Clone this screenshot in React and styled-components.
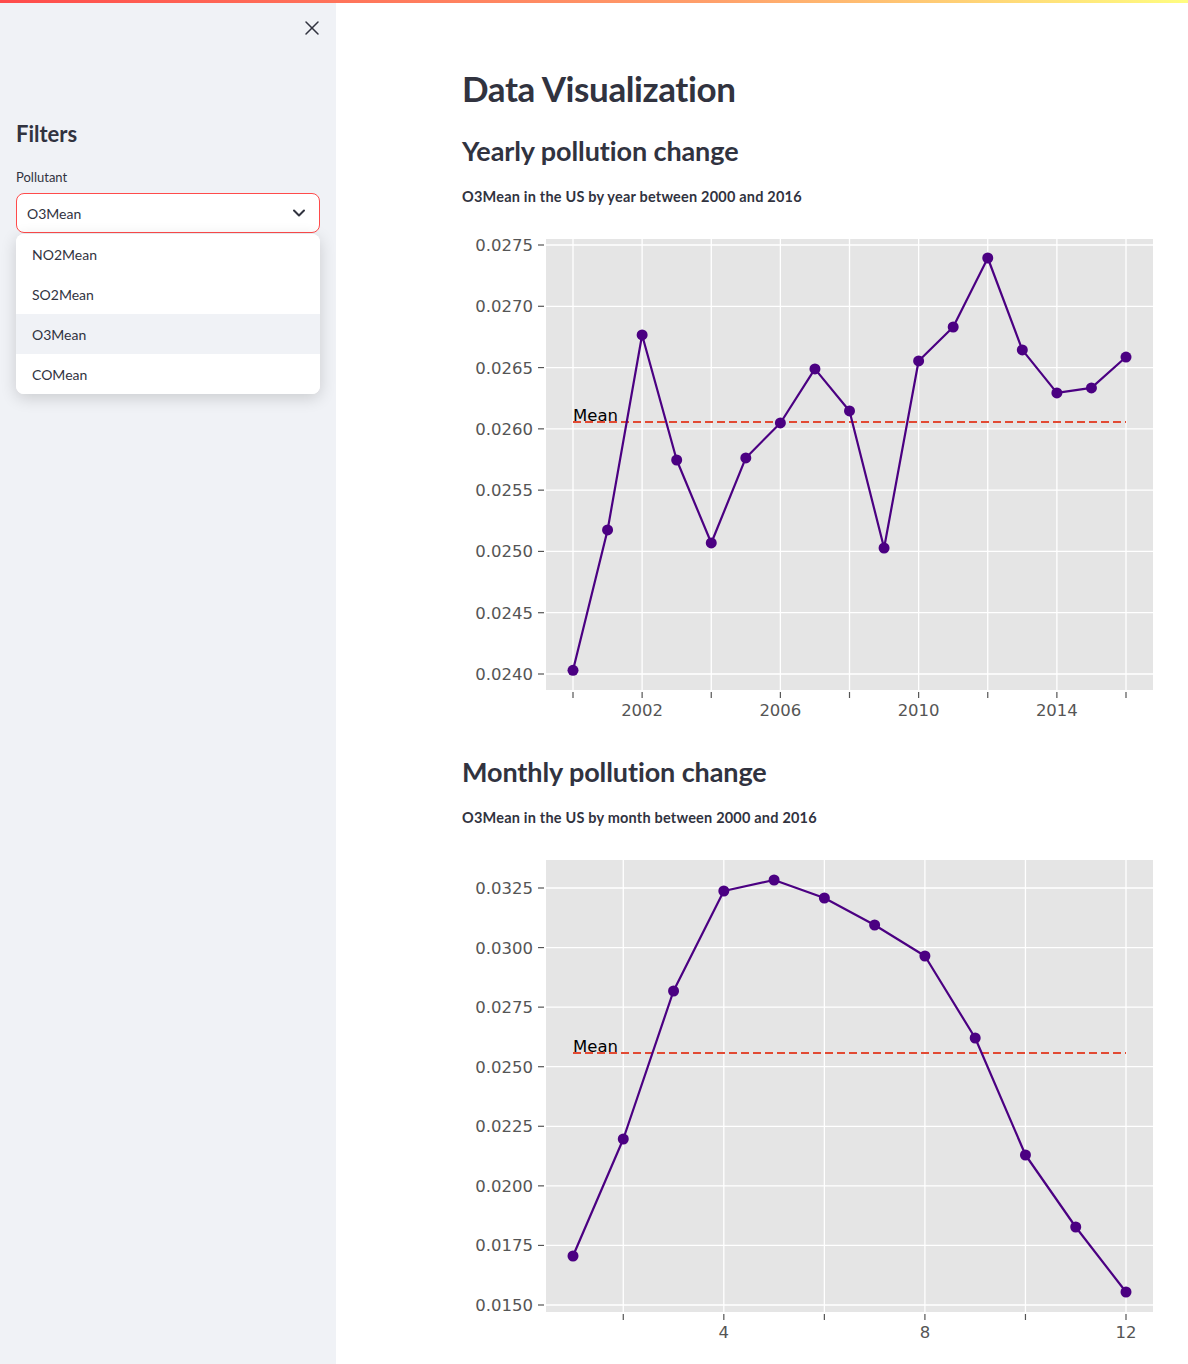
import React from "react";
import styled, { createGlobalStyle } from "styled-components";
import { X, ChevronDown } from "lucide-react";

const GlobalStyle = createGlobalStyle`
  html, body { margin: 0; padding: 0; background: #ffffff; }
  body {
    font-family: "Lato", "Noto Sans", sans-serif;
    color: #31333f;
    -webkit-font-smoothing: antialiased;
  }
  * { box-sizing: border-box; }
`;

const Page = styled.div`
  display: flex;
  flex-direction: column;
  width: 1188px;
  min-height: 1364px;
`;

const Decoration = styled.div`
  height: 3px;
  background: linear-gradient(90deg, #ff4b4b 0%, #ffa06b 60%, #fffd80 100%);
`;

const Layout = styled.div`
  display: flex;
  flex: 1;
`;

const Sidebar = styled.aside`
  width: 336px;
  flex-shrink: 0;
  background: #f0f2f6;
  padding: 13px 16px 0 16px;
  display: flex;
  flex-direction: column;
`;

const CloseRow = styled.div`
  display: flex;
  justify-content: flex-end;
  margin-right: -4px;
  color: #31333f;
  height: 24px;
`;

const SidebarTitle = styled.h2`
  margin: 79px 0 0 0;
  font-size: 22px;
  line-height: 30px;
  font-weight: 700;
  color: #31333f;
`;

const FieldLabel = styled.label`
  margin-top: 19px;
  font-size: 13px;
  line-height: 18px;
  color: #31333f;
`;

const SelectWrap = styled.div`
  position: relative;
  margin-top: 7px;
`;

const SelectBox = styled.div`
  height: 40px;
  border: 1px solid #ff4b4b;
  border-radius: 8px;
  background: #ffffff;
  display: flex;
  align-items: center;
  justify-content: space-between;
  padding: 0 10px 0 10px;
  font-size: 14px;
  color: #31333f;
`;

const Menu = styled.ul`
  position: absolute;
  top: calc(100% + 1px);
  left: 0;
  right: 0;
  margin: 0;
  padding: 0;
  list-style: none;
  background: #ffffff;
  border-radius: 8px;
  overflow: hidden;
  box-shadow: 0 4px 16px rgba(0, 0, 0, 0.16);
  z-index: 2;
`;

const MenuItem = styled.li`
  height: 40px;
  display: flex;
  align-items: center;
  padding-left: 16px;
  font-size: 14px;
  color: #31333f;
  background: ${(p) => (p.$active ? "#f0f2f6" : "#ffffff")};
`;

const Main = styled.main`
  flex: 1;
  padding: 63px 26px 0 126px;
  display: flex;
  flex-direction: column;
`;

const Title = styled.h1`
  margin: 0;
  font-size: 35px;
  line-height: 44px;
  font-weight: 700;
  color: #31333f;
  letter-spacing: -0.4px;
`;

const Section = styled.section`
  display: flex;
  flex-direction: column;
  margin-top: ${(p) => p.$gap}px;
`;

const SectionTitle = styled.h2`
  margin: 0;
  font-size: 27px;
  line-height: 36px;
  font-weight: 700;
  color: #31333f;
  letter-spacing: -0.1px;
`;

const Caption = styled.div`
  margin-top: 18px;
  font-size: 14.5px;
  line-height: 20px;
  font-weight: 700;
  letter-spacing: 0.2px;
  color: #31333f;
`;

const ChartFrame = styled.div`
  margin-top: 18px;
  display: flex;
`;

const yearly = [
  [2000, 0.02403], [2001, 0.025175], [2002, 0.026766], [2003, 0.025746],
  [2004, 0.025069], [2005, 0.025763], [2006, 0.026048], [2007, 0.026489],
  [2008, 0.026146], [2009, 0.025028], [2010, 0.026554], [2011, 0.026831],
  [2012, 0.027394], [2013, 0.026644], [2014, 0.026293], [2015, 0.026334],
  [2016, 0.026586],
];

const monthly = [
  [1, 0.017056], [2, 0.021966], [3, 0.028177], [4, 0.032374],
  [5, 0.032836], [6, 0.03208], [7, 0.030947], [8, 0.029646],
  [9, 0.026205], [10, 0.021295], [11, 0.018273], [12, 0.015545],
];

const range = (a, b, s) => {
  const out = [];
  for (let v = a; v <= b + 1e-9; v += s) out.push(+v.toFixed(6));
  return out;
};

const yearlyCfg = {
  width: 700,
  height: 505,
  plot: { l: 84, r: 691, t: 14, b: 465 },
  x: (v) => 111 + (v - 2000) * 34.5625,
  y: (v) => 20 + ((0.0275 - v) / 0.0005) * 61.286,
  yTicks: range(0.024, 0.0275, 0.0005),
  xTicks: range(2000, 2016, 2),
  xLabels: [2002, 2006, 2010, 2014],
  mean: 0.026056,
  xFirst: 2000,
  xLast: 2016,
  labelY: 491,
};

const monthlyCfg = {
  width: 700,
  height: 518,
  plot: { l: 84, r: 691, t: 14, b: 466 },
  x: (v) => 111 + (v - 1) * 50.273,
  y: (v) => 42 + ((0.0325 - v) / 0.0025) * 59.571,
  yTicks: range(0.015, 0.0325, 0.0025),
  xTicks: range(2, 12, 2),
  xLabels: [4, 8, 12],
  mean: 0.025576,
  xFirst: 1,
  xLast: 12,
  labelY: 492,
};

const tickFont = "'DejaVu Sans', 'Liberation Sans', sans-serif";

function LineChart({ cfg, data }) {
  const { plot, x, y } = cfg;
  const pts = data.map(([a, b]) => `${x(a).toFixed(1)},${y(b).toFixed(1)}`).join(" ");
  const my = y(cfg.mean);
  return (
    <svg width={cfg.width} height={cfg.height} viewBox={`0 0 ${cfg.width} ${cfg.height}`}>
      <rect x={plot.l} y={plot.t} width={plot.r - plot.l} height={plot.b - plot.t} fill="#e5e5e5" />
      {cfg.yTicks.map((t) => (
        <line key={"gy" + t} x1={plot.l} x2={plot.r} y1={y(t)} y2={y(t)} stroke="#ffffff" strokeWidth="1.3" />
      ))}
      {cfg.xTicks.map((t) => (
        <line key={"gx" + t} x1={x(t)} x2={x(t)} y1={plot.t} y2={plot.b} stroke="#ffffff" strokeWidth="1.3" />
      ))}
      {cfg.yTicks.map((t) => (
        <g key={"ty" + t}>
          <line x1={plot.l - 8} x2={plot.l - 2} y1={y(t)} y2={y(t)} stroke="#555555" strokeWidth="1.2" />
          <text
            x={plot.l - 13}
            y={y(t) + 6}
            textAnchor="end"
            fontFamily={tickFont}
            fontSize="16.5"
            fill="#555555"
          >
            {t.toFixed(4)}
          </text>
        </g>
      ))}
      {cfg.xTicks.map((t) => (
        <line key={"tx" + t} x1={x(t)} x2={x(t)} y1={plot.b + 2} y2={plot.b + 8} stroke="#555555" strokeWidth="1.2" />
      ))}
      {cfg.xLabels.map((t) => (
        <text
          key={"lx" + t}
          x={x(t)}
          y={cfg.labelY}
          textAnchor="middle"
          fontFamily={tickFont}
          fontSize="16.5"
          fill="#555555"
        >
          {t}
        </text>
      ))}
      <line
        x1={x(cfg.xFirst)}
        x2={x(cfg.xLast)}
        y1={my}
        y2={my}
        stroke="#e24a33"
        strokeWidth="2"
        strokeDasharray="8 4"
      />
      <text x={x(cfg.xFirst)} y={my - 0.5} fontFamily={tickFont} fontSize="16.5" fill="#000000">
        Mean
      </text>
      <polyline points={pts} fill="none" stroke="#4b0082" strokeWidth="2.2" strokeLinejoin="round" />
      {data.map(([a, b]) => (
        <circle key={"p" + a} cx={x(a)} cy={y(b)} r="5.5" fill="#4b0082" />
      ))}
    </svg>
  );
}

const options = ["NO2Mean", "SO2Mean", "O3Mean", "COMean"];

export default function App() {
  return (
    <Page>
      <GlobalStyle />
      <Decoration />
      <Layout>
        <Sidebar>
          <CloseRow>
            <X size={24} strokeWidth={1.5} />
          </CloseRow>
          <SidebarTitle>Filters</SidebarTitle>
          <FieldLabel>Pollutant</FieldLabel>
          <SelectWrap>
            <SelectBox>
              <span>O3Mean</span>
              <ChevronDown size={20} strokeWidth={2.4} />
            </SelectBox>
            <Menu>
              {options.map((o) => (
                <MenuItem key={o} $active={o === "O3Mean"}>
                  {o}
                </MenuItem>
              ))}
            </Menu>
          </SelectWrap>
        </Sidebar>
        <Main>
          <Title>Data Visualization</Title>
          <Section $gap={23}>
            <SectionTitle>Yearly pollution change</SectionTitle>
            <Caption>O3Mean in the US by year between 2000 and 2016</Caption>
            <ChartFrame>
              <LineChart cfg={yearlyCfg} data={yearly} />
            </ChartFrame>
          </Section>
          <Section $gap={24}>
            <SectionTitle>Monthly pollution change</SectionTitle>
            <Caption>O3Mean in the US by month between 2000 and 2016</Caption>
            <ChartFrame>
              <LineChart cfg={monthlyCfg} data={monthly} />
            </ChartFrame>
          </Section>
        </Main>
      </Layout>
    </Page>
  );
}
